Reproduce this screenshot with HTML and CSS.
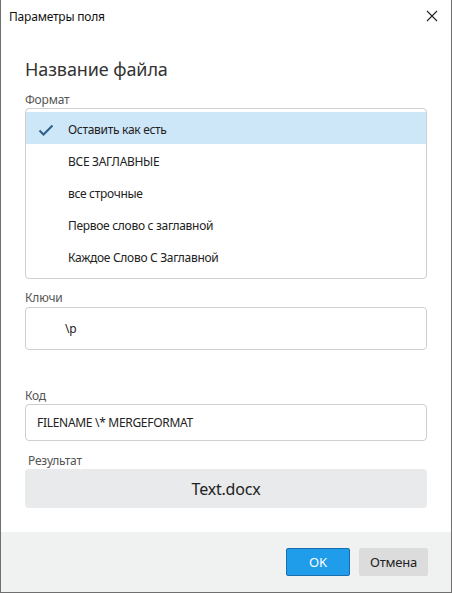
FILE: index.html
```html
<!DOCTYPE html>
<html lang="ru">
<head>
<meta charset="utf-8">
<link rel="stylesheet" href="styles.css">
</head>
<body>
<div class="window">
  <div class="titlebar">
    <span class="title">Параметры поля</span>
    <svg class="close" width="12" height="12" viewBox="0 0 12 12"><path d="M1 1L11 11M11 1L1 11" stroke="#222" stroke-width="1.1" fill="none"/></svg>
  </div>
  <div class="content">
    <h1 class="heading">Название файла</h1>
    <div class="label label-format">Формат</div>
    <div class="listbox">
      <div class="item selected">
        <svg class="check" width="16" height="12" viewBox="0 0 16 12"><path d="M1.5 6.5L5.5 10.5L14.5 1.5" stroke="#2e5f8c" stroke-width="2" fill="none"/></svg>
        <span>Оставить как есть</span>
      </div>
      <div class="item"><span>ВСЕ ЗАГЛАВНЫЕ</span></div>
      <div class="item"><span>все строчные</span></div>
      <div class="item"><span>Первое слово с заглавной</span></div>
      <div class="item"><span>Каждое Слово С Заглавной</span></div>
    </div>
    <div class="label label-keys">Ключи</div>
    <div class="field field-keys">\p</div>
    <div class="label label-code">Код</div>
    <div class="field field-code">FILENAME \* MERGEFORMAT</div>
    <div class="label label-result">Результат</div>
    <div class="result">Text.docx</div>
  </div>
  <div class="footer">
    <button class="btn btn-ok">OK</button>
    <button class="btn btn-cancel">Отмена</button>
  </div>
</div>
</body>
</html>
```

FILE: styles.css
```css
* { box-sizing: border-box; }
html, body { margin: 0; padding: 0; }
body {
  width: 452px;
  height: 593px;
  background: #fff;
  font-family: "Noto Sans", "Open Sans", sans-serif;
  color: #222;
  overflow: hidden;
}
.window {
  width: 452px;
  height: 593px;
  border: 1px solid #6f6f6f;
  border-top: none;
  display: flex;
  flex-direction: column;
  background: #fff;
}
.titlebar {
  height: 32px;
  flex: none;
  display: flex;
  align-items: center;
  justify-content: space-between;
  padding: 0 13px 0 8px;
}
.title {
  font-size: 12px;
  color: #111;
  letter-spacing: -0.2px;
}
.content {
  height: 500px;
  flex: none;
  padding: 0 24px;
  display: flex;
  flex-direction: column;
}
.heading {
  margin: 24px 0 0 0;
  font-size: 18px;
  font-weight: 400;
  color: #333;
  line-height: 26px;
  height: 26px;
  letter-spacing: -0.1px;
}
.label {
  font-size: 12px;
  color: #555;
  line-height: 16px;
  height: 16px;
  letter-spacing: -0.2px;
  flex: none;
}
.label-format { margin-top: 10px; }
.listbox {
  height: 171px;
  flex: none;
  border: 1px solid #cfcfcf;
  border-radius: 4px;
  padding-top: 3px;
}
.item {
  height: 32px;
  display: flex;
  align-items: center;
  padding-left: 42px;
  padding-top: 3px;
  font-size: 12px;
  color: #222;
  letter-spacing: -0.3px;
  position: relative;
}
.item.selected { background: #cde6f8; }
.check {
  position: absolute;
  left: 12px;
  top: 12px;
}
.label-keys { margin-top: 11px; }
.field {
  flex: none;
  border: 1px solid #cfcfcf;
  border-radius: 4px;
  font-size: 12px;
  color: #222;
  display: flex;
  align-items: center;
  letter-spacing: -0.3px;
}
.field-keys {
  margin-top: 1px;
  height: 43px;
  padding: 0 0 1px 39px;
}
.label-code { margin-top: 38px; }
.field-code {
  height: 37px;
  padding-left: 11px;
}
.label-result {
  margin-top: 12px;
  padding-left: 3px;
}
.result {
  flex: none;
  height: 39px;
  background: #e9eaec;
  border-radius: 4px;
  display: flex;
  align-items: center;
  justify-content: center;
  font-size: 16px;
  color: #222;
  letter-spacing: -0.2px;
}
.footer {
  flex: 1;
  background: #f0f1f1;
  display: flex;
  justify-content: flex-end;
  align-items: flex-start;
  padding: 16px 23px 0 0;
  gap: 9px;
}
.btn {
  height: 28px;
  font-family: "Noto Sans", "Open Sans", sans-serif;
  font-size: 13px;
  border-radius: 2px;
  padding: 0;
  letter-spacing: -0.2px;
}
.btn-ok {
  width: 64px;
  background: #1f9cea;
  border: 1px solid #1a6eb0;
  color: #fff;
}
.btn-cancel {
  width: 69px;
  background: #dcdcdc;
  border: 1px solid #dcdcdc;
  color: #222;
}
```
